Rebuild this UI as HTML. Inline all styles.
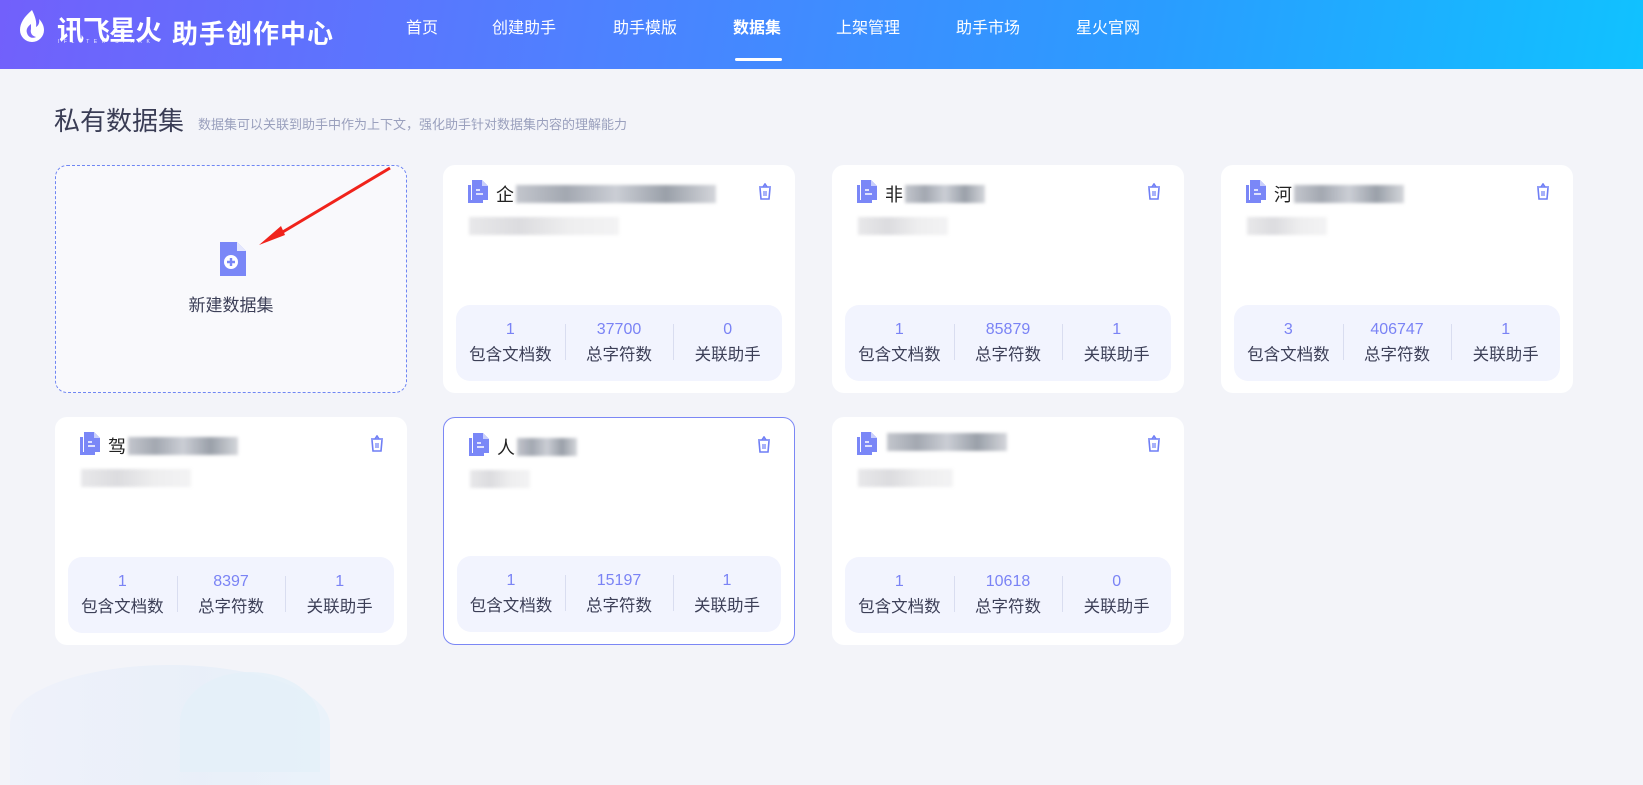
<!DOCTYPE html>
<html><head><meta charset="utf-8"><style>
*{margin:0;padding:0;box-sizing:border-box}
body{width:1643px;height:717px;overflow:hidden;background:#f3f4f9;font-family:"Liberation Sans","Noto Sans CJK SC",sans-serif;position:relative}
.hdr{position:absolute;left:0;top:0;width:1643px;height:69px;background:linear-gradient(100deg,#7260fb 0%,#4f80ff 35%,#2a9cff 70%,#10c2ff 100%)}
.nav{position:absolute;top:18px;color:#fff;font-size:16px;line-height:22px}
.ul{position:absolute;left:735px;top:58px;width:47px;height:3px;background:#fff;border-radius:2px}
.logo1{position:absolute;left:57px;top:9px;color:#fff;font-size:27px;font-weight:bold;letter-spacing:-1px}
.logo1s{position:absolute;left:58px;top:39px;color:#fff;font-size:5px;letter-spacing:4.5px;opacity:.9}
.logo2{position:absolute;left:172px;top:14px;color:#fff;font-size:26px;font-weight:bold;letter-spacing:1px}
h1{position:absolute;left:54px;top:101px;font-size:26px;font-weight:normal;color:#3a3d55}
.sub{position:absolute;left:198px;top:114px;font-size:13px;color:#9aa0bd}
.card{position:absolute;width:352px;height:228px;background:#fff;border-radius:12px}
.new{background:#f9f9fc;border:1px dashed #6f86f3}
.ic{position:absolute;left:24px;top:14px}
.tr{position:absolute;right:23px;top:18px}
.tt{position:absolute;left:53px;top:16px;font-size:18px;color:#222;display:flex;align-items:center}
.blk{display:inline-block;height:18px;background:linear-gradient(90deg,#c3c6cd,#a3a8b1,#cbced5,#9aa0a9,#d4d6db);filter:blur(1.5px);margin-left:2px}
.ds{position:absolute;left:26px;top:52px;height:18px;background:linear-gradient(90deg,#e8e8ea,#dcdcdf,#eeeeef,#f3f3f4);filter:blur(1.5px)}
.st{position:absolute;left:13px;right:13px;bottom:12px;height:76px;background:#f2f4fe;border-radius:14px;display:flex;align-items:center}
.col{flex:1;text-align:center;position:relative}
.col+.col:before{content:"";position:absolute;left:0;top:6px;height:36px;border-left:1px solid #d9ddf0}
.n{font-size:16px;color:#7a83f5;line-height:24px;font-weight:500}
.l{font-size:16.5px;color:#3c3f57;line-height:26px}
</style></head><body>
<div class="hdr">
<svg style="position:absolute;left:18px;top:9px" width="28" height="36" viewBox="0 0 28 36"><path d="M14 1C6 8 2 14 2 21a12 12 0 0 0 24 0c0-4-2-8-5-11 1 4-1 7-3 8 1-5-1-11-4-17z" fill="#fff"/><path d="M13 15c-4 3-5 6-4 9 1 4 5 6 9 4-4-1-6-4-5-8z" fill="#7a66fb"/></svg>
<div class="logo1">讯飞星火</div><div class="logo1s">IFLYTEK SPARK</div>
<div class="logo2">助手创作中心</div>
<div class="nav" style="left:406px">首页</div>
<div class="nav" style="left:492px">创建助手</div>
<div class="nav" style="left:613px">助手模版</div>
<div class="nav" style="left:733px;font-weight:bold">数据集</div>
<div class="nav" style="left:836px">上架管理</div>
<div class="nav" style="left:956px">助手市场</div>
<div class="nav" style="left:1076px">星火官网</div>
<div class="ul"></div>
</div>
<h1>私有数据集</h1>
<div class="sub">数据集可以关联到助手中作为上下文，强化助手针对数据集内容的理解能力</div>
<div style="position:absolute;left:10px;top:665px;width:320px;height:120px;border-radius:50% 50% 0 0;background:linear-gradient(90deg,#eef1fa,#e6eef9 60%,#e8f2fa);opacity:.8"></div>
<div style="position:absolute;left:180px;top:672px;width:140px;height:100px;border-radius:50% 50% 0 0;background:#e4f0f9;opacity:.8"></div>

<div class="card new" style="left:55px;top:165px;height:228px">
<svg style="position:absolute;left:162px;top:76px" width="28" height="34" viewBox="0 0 28 34"><path d="M2 0h17l9 9v25H2z" fill="#7a87f7"/><path d="M19 0v9h9" fill="#fff" opacity=".8"/><circle cx="13" cy="20" r="7" fill="#fff"/><path d="M13 16v8M9 20h8" stroke="#7a87f7" stroke-width="2.4"/></svg>
<div style="position:absolute;left:0;width:100%;top:125px;text-align:center;font-size:17px;color:#3c3f57">新建数据集</div>
<svg style="position:absolute;left:0;top:0" width="352" height="228"><path d="M334 2L220 70" stroke="#f0231b" stroke-width="3"/><path d="M203 79l22-19 4 9z" fill="#f0231b"/></svg>
</div>

<div id="cards"></div>
<script>
const icon='<svg class="ic" width="22" height="24" viewBox="0 0 22 24"><path d="M1 6h3v15h12v3H1z" fill="#7a87f7"/><path d="M5 1h10l6 6v14H5z" fill="#7a87f7"/><path d="M15 1v6h6" fill="#c9cffc"/><path d="M9 11h4M9 15h7" stroke="#fff" stroke-width="1.6"/></svg>';
const trash='<svg class="tr" width="14" height="17" viewBox="0 0 14 17"><path d="M1 4h12M5 4l2-3 2 3M2 5l1 11h8l1-11" fill="none" stroke="#6f7ef5" stroke-width="1.6"/><path d="M6 8v5M8 8v5" stroke="#6f7ef5" stroke-width="1.2"/></svg>';
const data=[
[443,165,'企',200,150,'1','37700','0',false],
[832,165,'非',80,90,'1','85879','1',false],
[1221,165,'河',110,80,'3','406747','1',false],
[55,417,'驾',110,110,'1','8397','1',false],
[443,417,'人',60,60,'1','15197','1',true],
[832,417,'',120,95,'1','10618','0',false]];
let h='';
for(const d of data){
h+=`<div class="card" style="left:${d[0]}px;top:${d[1]}px;${d[8]?'border:1px solid #7b87f5':''}">${icon}${trash}
<div class="tt">${d[2]}<span class="blk" style="width:${d[3]}px"></span></div>
<div class="ds" style="width:${d[4]}px"></div>
<div class="st"><div class="col"><div class="n">${d[5]}</div><div class="l">包含文档数</div></div><div class="col"><div class="n">${d[6]}</div><div class="l">总字符数</div></div><div class="col"><div class="n">${d[7]}</div><div class="l">关联助手</div></div></div></div>`;
}
document.getElementById('cards').innerHTML=h;
</script>
</body></html>
